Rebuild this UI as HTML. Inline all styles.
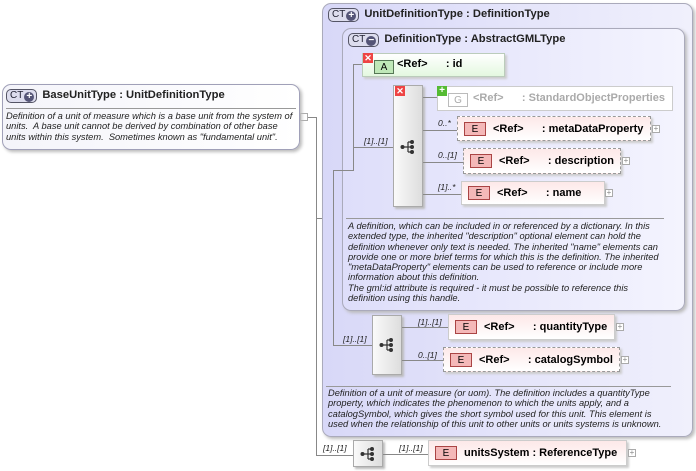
<!DOCTYPE html>
<html><head><meta charset="utf-8"><style>
*{box-sizing:border-box;margin:0;padding:0}
body{width:696px;height:471px;background:#fff;position:relative;overflow:hidden;font-family:"Liberation Sans",sans-serif;color:#000}
.a{position:absolute}
.ct{position:absolute;border:1px solid #a0a0b8;border-radius:9px;box-shadow:2px 2px 3px #bbb}
.hd{position:absolute;font-size:11.2px;font-weight:bold;color:#222;white-space:nowrap}
.badge{display:inline-block;border:1px solid #556;border-radius:5px;font-size:10px;font-weight:normal;padding:0 2px 0 3px;background:#dde;color:#223;height:14px;line-height:12px;vertical-align:0;margin-right:5px}
.badge b{display:inline-block;width:10px;height:10px;border-radius:50%;background:#557;color:#fff;font-size:10px;line-height:9px;text-align:center;vertical-align:-1px;margin-left:1px}
.desc{position:absolute;font-size:9.3px;font-style:italic;line-height:10.3px;color:#222}
.sep{position:absolute;height:1px;background:#999}
.h{position:absolute;height:1px;background:#888}
.v{position:absolute;width:1px;background:#888}
.el{position:absolute;background:linear-gradient(#fde8e8,#fff);border:1px solid #ccc;box-shadow:2px 2px 2px #ccc;font-size:11px;font-weight:bold;white-space:nowrap;padding-left:6px;display:flex;align-items:center}
.el.d{border:1px dashed #999}
.E{display:inline-block;width:22px;height:14px;border:1px solid #a44;background:#f4b8b8;font-size:10px;font-weight:normal;text-align:center;line-height:13px;margin-right:7px}
.pl{position:absolute;width:8px;height:8px;border:1px solid #aaa;font-size:8px;line-height:6px;text-align:center;color:#888;background:#fff}
.seq{position:absolute;background:linear-gradient(90deg,#fafafa,#ddd);border:1px solid #aaa;box-shadow:2px 2px 2px #bbb}
.card{position:absolute;font-size:8.5px;font-style:italic;color:#222}
.x{position:absolute;width:10px;height:10px;background:#e44;color:#fff;font-size:9px;line-height:10px;text-align:center;font-weight:bold}
.ic{position:absolute;width:16px;height:16px}
</style></head><body>
<svg width="0" height="0" style="position:absolute"><defs><g id="sq"><circle cx="2.5" cy="8" r="2" fill="#333"/><path d="M4 8H8M8 3V13M8 3H11M8 8H11M8 13H11" stroke="#333" stroke-width="1.2" fill="none"/><circle cx="12" cy="3" r="2" fill="#333"/><circle cx="12" cy="8" r="2" fill="#333"/><circle cx="12" cy="13" r="2" fill="#333"/></g></defs></svg>
<!-- lines -->
<div class="h" style="left:307px;top:117px;width:10px"></div>
<div class="v" style="left:316px;top:117px;height:339px"></div>
<div class="h" style="left:316px;top:218px;width:17px"></div>
<div class="h" style="left:316px;top:455px;width:37px"></div>
<div class="a" style="left:300px;top:113px;width:8px;height:8px;border:1px solid #aaa;background:#fff"></div>

<!-- BaseUnitType -->
<div class="ct" style="left:2px;top:84px;width:298px;height:66px;background:linear-gradient(90deg,#f4f4fa,#fff)"></div>
<div class="hd" style="left:6px;top:89px"><span class="badge">CT<b>+</b></span>BaseUnitType : UnitDefinitionType</div>
<div class="sep" style="left:6px;top:108px;width:290px"></div>
<div class="desc" style="left:6px;top:111px;width:292px">Definition of a unit of measure which is a base unit from the system of units.&nbsp; A base unit cannot be derived by combination of other base units within this system.&nbsp; Sometimes known as "fundamental unit".</div>

<!-- outer CT -->
<div class="ct" style="left:322px;top:3px;width:371px;height:434px;background:linear-gradient(90deg,#d8d8f8,#f0f0fc);border-color:#aab"></div>
<div class="hd" style="left:328px;top:8px"><span class="badge">CT<b>+</b></span>UnitDefinitionType : DefinitionType</div>
<!-- inner CT -->
<div class="ct" style="left:342px;top:28px;width:343px;height:283px;background:linear-gradient(90deg,#dedefa,#f4f4fe);border-color:#aab"></div>
<div class="hd" style="left:348px;top:33px"><span class="badge">CT<b>−</b></span>DefinitionType : AbstractGMLType</div>

<div class="v" style="left:353px;top:64px;height:106px"></div>
<div class="h" style="left:353px;top:64px;width:10px"></div>
<div class="h" style="left:333px;top:170px;width:21px"></div>
<div class="v" style="left:333px;top:170px;height:175px"></div>
<div class="h" style="left:333px;top:345px;width:39px"></div>
<div class="h" style="left:353px;top:147px;width:40px"></div>
<div class="card" style="left:364px;top:136px">[1]..[1]</div>

<!-- attribute id -->
<div class="a" style="left:362px;top:53px;width:143px;height:24px;background:linear-gradient(#fff,#e4f8e0);border:1px solid #bcb;box-shadow:2px 2px 2px #ccc;font-size:11px;font-weight:bold"><span style="position:absolute;left:11px;top:6px;width:20px;height:14px;border:1px solid #575;background:#bfe8b8;font-weight:normal;font-size:10px;text-align:center;line-height:13px">A</span><span style="position:absolute;left:34px;top:4px">&lt;Ref&gt;&nbsp;&nbsp;&nbsp;&nbsp;&nbsp; : id</span></div>
<div class="x" style="left:363px;top:53px">✕</div>

<!-- sequence 1 -->
<div class="seq" style="left:393px;top:85px;width:30px;height:122px"></div>
<div class="x" style="left:395px;top:86px">✕</div>
<svg class="ic" style="left:400px;top:139px" viewBox="0 0 16 16"><use href="#sq"/></svg>
<div class="h" style="left:423px;top:97px;width:14px"></div>
<div class="h" style="left:423px;top:130px;width:34px"></div>
<div class="h" style="left:423px;top:162px;width:40px"></div>
<div class="h" style="left:423px;top:194px;width:38px"></div>

<div class="a" style="left:437px;top:86px;width:236px;height:25px;border:1px solid #ccc;background:#fff;font-size:11px;font-weight:bold;color:#aaa;white-space:nowrap"><span style="position:absolute;left:10px;top:6px;width:20px;height:14px;border:1px solid #bbb;font-weight:normal;font-size:10px;text-align:center;line-height:13px">G</span><span style="position:absolute;left:35px;top:5px">&lt;Ref&gt;&nbsp;&nbsp;&nbsp;&nbsp;&nbsp; : StandardObjectProperties</span></div>
<div class="a" style="left:437px;top:86px;width:10px;height:10px;background:#5b3;color:#fff;font-size:10px;line-height:9px;text-align:center;font-weight:bold">+</div>

<div class="card" style="left:438px;top:118px">0..*</div>
<div class="el d" style="left:457px;top:116px;width:194px;height:25px"><span class="E">E</span>&lt;Ref&gt;&nbsp;&nbsp;&nbsp;&nbsp;&nbsp; : metaDataProperty</div>
<div class="pl" style="left:652px;top:125px">+</div>
<div class="card" style="left:438px;top:150px">0..[1]</div>
<div class="el d" style="left:463px;top:148px;width:158px;height:26px"><span class="E">E</span>&lt;Ref&gt;&nbsp;&nbsp;&nbsp;&nbsp;&nbsp; : description</div>
<div class="pl" style="left:622px;top:157px">+</div>
<div class="card" style="left:438px;top:182px">[1]..*</div>
<div class="el" style="left:461px;top:181px;width:144px;height:24px"><span class="E">E</span>&lt;Ref&gt;&nbsp;&nbsp;&nbsp;&nbsp;&nbsp; : name</div>
<div class="pl" style="left:605px;top:189px">+</div>

<div class="sep" style="left:346px;top:218px;width:318px"></div>
<div class="desc" style="left:348px;top:221px;width:318px">A definition, which can be included in or referenced by a dictionary. In this extended type, the inherited "description" optional element can hold the definition whenever only text is needed. The inherited "name" elements can provide one or more brief terms for which this is the definition. The inherited "metaDataProperty" elements can be used to reference or include more information about this definition.<br>The gml:id attribute is required - it must be possible to reference this definition using this handle.</div>

<!-- sequence 2 -->
<div class="card" style="left:343px;top:334px">[1]..[1]</div>
<div class="seq" style="left:372px;top:315px;width:30px;height:60px"></div>
<svg class="ic" style="left:379px;top:337px" viewBox="0 0 16 16"><use href="#sq"/></svg>
<div class="h" style="left:402px;top:327px;width:46px"></div>
<div class="h" style="left:402px;top:360px;width:41px"></div>
<div class="card" style="left:418px;top:317px">[1]..[1]</div>
<div class="el" style="left:448px;top:314px;width:167px;height:26px"><span class="E">E</span>&lt;Ref&gt;&nbsp;&nbsp;&nbsp;&nbsp;&nbsp; : quantityType</div>
<div class="pl" style="left:616px;top:323px">+</div>
<div class="card" style="left:418px;top:350px">0..[1]</div>
<div class="el d" style="left:443px;top:347px;width:177px;height:25px"><span class="E">E</span>&lt;Ref&gt;&nbsp;&nbsp;&nbsp;&nbsp;&nbsp; : catalogSymbol</div>
<div class="pl" style="left:621px;top:356px">+</div>

<div class="sep" style="left:326px;top:386px;width:345px"></div>
<div class="desc" style="left:328px;top:388px;width:346px">Definition of a unit of measure (or uom). The definition includes a quantityType property, which indicates the phenomenon to which the units apply, and a catalogSymbol, which gives the short symbol used for this unit. This element is used when the relationship of this unit to other units or units systems is unknown.</div>

<!-- bottom -->
<div class="card" style="left:323px;top:443px">[1]..[1]</div>
<div class="seq" style="left:353px;top:440px;width:30px;height:27px"></div>
<svg class="ic" style="left:360px;top:446px" viewBox="0 0 16 16"><use href="#sq"/></svg>
<div class="h" style="left:383px;top:454px;width:45px"></div>
<div class="card" style="left:399px;top:443px">[1]..[1]</div>
<div class="el" style="left:428px;top:440px;width:199px;height:26px"><span class="E">E</span>unitsSystem : ReferenceType</div>
<div class="pl" style="left:628px;top:449px">+</div>
</body></html>
